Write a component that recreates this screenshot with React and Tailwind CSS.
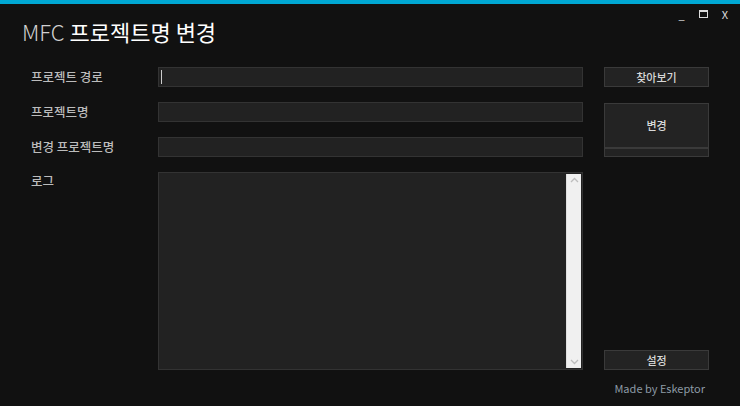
const font = { fontFamily: '"Noto Sans CJK KR", "Noto Sans", sans-serif' };

function Field({ cursor }) {
  return (
    <div className="h-[20px] bg-[#222222] border border-[#333333] flex items-center px-[2px]">
      {cursor && <div className="w-px h-[14px] bg-[#cccccc]" />}
    </div>
  );
}

function Btn({ children, className = '' }) {
  return (
    <button className={'bg-[#232323] border border-[#3a3a3a] text-[#d8d8d8] text-[11px] font-medium flex items-center justify-center ' + className}>
      {children}
    </button>
  );
}

export default function App() {
  return (
    <div className="w-[740px] h-[406px] bg-[#111111] flex flex-col overflow-hidden" style={font}>
      <div className="h-[4px] bg-[#00a8d4]" />
      <div className="flex justify-between">
        <h1 className="pl-[22px] pt-[13px] text-[22px] leading-[29px] text-white">
          <span className="text-[#d0d0d0] font-light">MFC</span> 프로젝트명 변경
        </h1>
        <div className="flex items-start gap-[14px] pr-[12px] pt-[3px] text-[#dcdcdc] text-[11px] leading-[14px]">
          <span>_</span>
          <span className="mt-[3px] w-[9px] h-[8px] border border-[#dcdcdc] border-t-2" />
          <span>X</span>
        </div>
      </div>

      <div className="mt-[21px] grid grid-cols-[106px_425px_105px] grid-rows-[20px_20px_20px_198px] gap-x-[21px] gap-y-[15px] pl-[31px]">
        <div className="text-[12.5px] font-medium text-[#bcbcbc] flex items-center">프로젝트 경로</div>
        <Field cursor />
        <Btn className="h-[20px]">찾아보기</Btn>

        <div className="text-[12.5px] font-medium text-[#bcbcbc] flex items-center">프로젝트명</div>
        <Field />
        <div className="row-span-2 flex flex-col pt-px">
          <Btn className="h-[45px]">변경</Btn>
          <div className="h-[9px] bg-[#232323] border border-[#3a3a3a]" />
        </div>

        <div className="text-[12.5px] font-medium text-[#bcbcbc] flex items-center">변경 프로젝트명</div>
        <Field />

        <div className="text-[12.5px] font-medium text-[#bcbcbc] pt-[1px] leading-[16px]">로그</div>
        <div className="bg-[#222222] border border-[#333333] flex justify-end">
          <div className="w-[15px] bg-[#f0f0f0] border-l border-[#e0e0e0] flex flex-col justify-between items-center py-[3px] mr-px my-px">
            <svg width="9" height="6" viewBox="0 0 9 6"><path d="M1 5 L4.5 1.5 L8 5" fill="none" stroke="#bdbdbd" strokeWidth="1.3" /></svg>
            <svg width="9" height="6" viewBox="0 0 9 6"><path d="M1 1 L4.5 4.5 L8 1" fill="none" stroke="#bdbdbd" strokeWidth="1.3" /></svg>
          </div>
        </div>
        <div className="flex items-end">
          <Btn className="h-[20px] w-full">설정</Btn>
        </div>
      </div>

      <div className="flex justify-end pr-[35px] mt-[10px]">
        <span className="text-[11px] text-[#8d9ba6]">Made by Eskeptor</span>
      </div>
    </div>
  );
}
